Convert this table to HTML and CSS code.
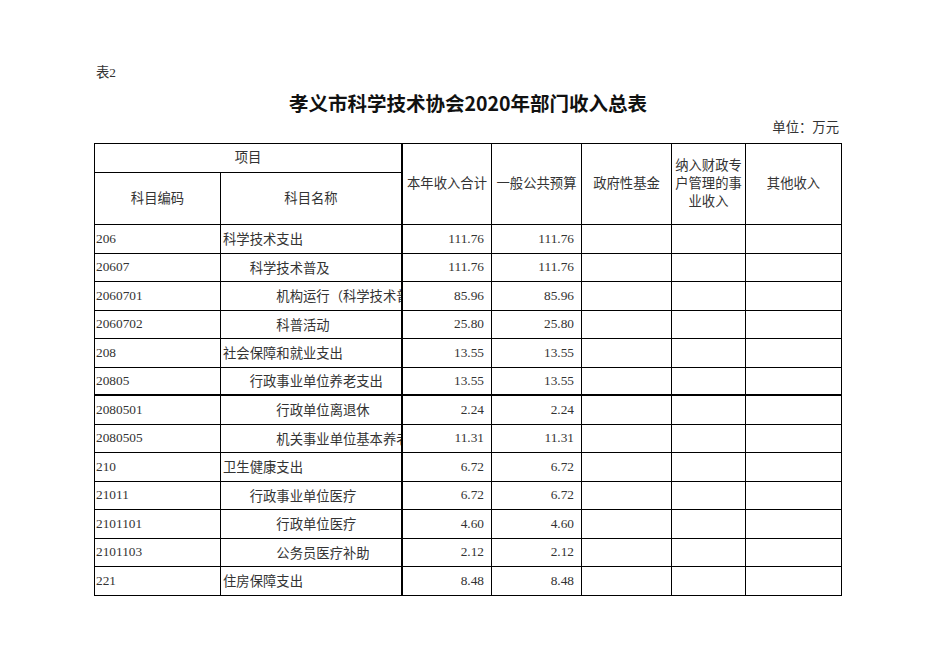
FILE: index.html
```html
<!DOCTYPE html>
<html lang="zh-CN">
<head>
<meta charset="utf-8">
<title>孝义市科学技术协会2020年部门收入总表</title>
<link rel="stylesheet" href="styles.css">
</head>
<body>
<div class="page">
  <div class="note">表2</div>
  <h1 class="title">孝义市科学技术协会2020年部门收入总表</h1>
  <div class="unit">单位：万元</div>
  <table class="grid">
    <colgroup>
      <col class="c1"><col class="c2"><col class="c3"><col class="c4"><col class="c5"><col class="c6"><col class="c7">
    </colgroup>
    <thead>
      <tr class="hr1">
        <th colspan="2" class="thick-r">项目</th>
        <th rowspan="2">本年收入合计</th>
        <th rowspan="2">一般公共预算</th>
        <th rowspan="2">政府性基金</th>
        <th rowspan="2" class="multi">纳入财政专<br>户管理的事<br>业收入</th>
        <th rowspan="2">其他收入</th>
      </tr>
      <tr class="hr2">
        <th>科目编码</th>
        <th class="thick-r">科目名称</th>
      </tr>
    </thead>
    <tbody>
      <tr><td class="code">206</td><td class="name thick-r">科学技术支出</td><td class="num">111.76</td><td class="num">111.76</td><td></td><td></td><td></td></tr>
      <tr><td class="code">20607</td><td class="name l2 thick-r">科学技术普及</td><td class="num">111.76</td><td class="num">111.76</td><td></td><td></td><td></td></tr>
      <tr><td class="code">2060701</td><td class="name l3 thick-r">机构运行（科学技术普及）</td><td class="num">85.96</td><td class="num">85.96</td><td></td><td></td><td></td></tr>
      <tr><td class="code">2060702</td><td class="name l3 thick-r">科普活动</td><td class="num">25.80</td><td class="num">25.80</td><td></td><td></td><td></td></tr>
      <tr><td class="code">208</td><td class="name thick-r">社会保障和就业支出</td><td class="num">13.55</td><td class="num">13.55</td><td></td><td></td><td></td></tr>
      <tr class="thick-b"><td class="code">20805</td><td class="name l2 thick-r">行政事业单位养老支出</td><td class="num">13.55</td><td class="num">13.55</td><td></td><td></td><td></td></tr>
      <tr><td class="code">2080501</td><td class="name l3 thick-r">行政单位离退休</td><td class="num">2.24</td><td class="num">2.24</td><td></td><td></td><td></td></tr>
      <tr><td class="code">2080505</td><td class="name l3 thick-r">机关事业单位基本养老保险缴费支出</td><td class="num">11.31</td><td class="num">11.31</td><td></td><td></td><td></td></tr>
      <tr><td class="code">210</td><td class="name thick-r">卫生健康支出</td><td class="num">6.72</td><td class="num">6.72</td><td></td><td></td><td></td></tr>
      <tr><td class="code">21011</td><td class="name l2 thick-r">行政事业单位医疗</td><td class="num">6.72</td><td class="num">6.72</td><td></td><td></td><td></td></tr>
      <tr><td class="code">2101101</td><td class="name l3 thick-r">行政单位医疗</td><td class="num">4.60</td><td class="num">4.60</td><td></td><td></td><td></td></tr>
      <tr><td class="code">2101103</td><td class="name l3 thick-r">公务员医疗补助</td><td class="num">2.12</td><td class="num">2.12</td><td></td><td></td><td></td></tr>
      <tr><td class="code">221</td><td class="name thick-r">住房保障支出</td><td class="num">8.48</td><td class="num">8.48</td><td></td><td></td><td></td></tr>
    </tbody>
  </table>
</div>
</body>
</html>
```
FILE: styles.css
```css
html, body {
  margin: 0;
  padding: 0;
  background: #ffffff;
}

body {
  font-family: "Liberation Serif", "Noto Sans CJK SC", serif;
  font-size: 13.33px;
  color: #333333;
}

.page {
  width: 748px;
  padding: 64px 0 0 94px;
}

.note {
  height: 18px;
  line-height: 18px;
  padding-left: 2px;
}

.title {
  margin: 9px 0 0;
  height: 24px;
  line-height: 24px;
  font-family: "Noto Sans CJK SC", sans-serif;
  font-size: 19.5px;
  font-weight: 700;
  color: #111111;
  text-align: center;
}

.unit {
  margin-top: 4px;
  height: 18px;
  line-height: 18px;
  text-align: right;
  padding-right: 3px;
}

.grid {
  margin-top: 6px;
  width: 748px;
  table-layout: fixed;
  border-collapse: separate;
  border-spacing: 0;
  border-top: 1px solid #000;
  border-left: 1px solid #000;
}

.c1 { width: 126px; }
.c2 { width: 182px; }
.c3 { width: 89px; }
.c4 { width: 90px; }
.c5 { width: 90px; }
.c6 { width: 74px; }
.c7 { width: 96px; }

.grid th,
.grid td {
  box-sizing: border-box;
  border-right: 1px solid #000;
  border-bottom: 1px solid #000;
  padding: 0;
  white-space: nowrap;
  overflow: hidden;
  vertical-align: middle;
}

.grid th {
  font-weight: 400;
  text-align: center;
  line-height: 18px;
}

.grid th.multi {
  white-space: normal;
  line-height: 18px;
}

.hr1 { height: 29px; }
.hr2 { height: 52px; }

.grid tbody tr { height: 28.5px; }

.grid .thick-r { border-right-width: 2px; }
.grid tr.thick-b td { border-bottom-width: 2px; }

.code {
  padding-left: 1px !important;
  text-align: left;
}

.name {
  padding-left: 2px !important;
  text-align: left;
  text-overflow: clip;
}

.name.l2 { padding-left: 28.67px !important; }
.name.l3 { padding-left: 55.33px !important; }

.num {
  text-align: right;
  padding-right: 7px !important;
}
```
